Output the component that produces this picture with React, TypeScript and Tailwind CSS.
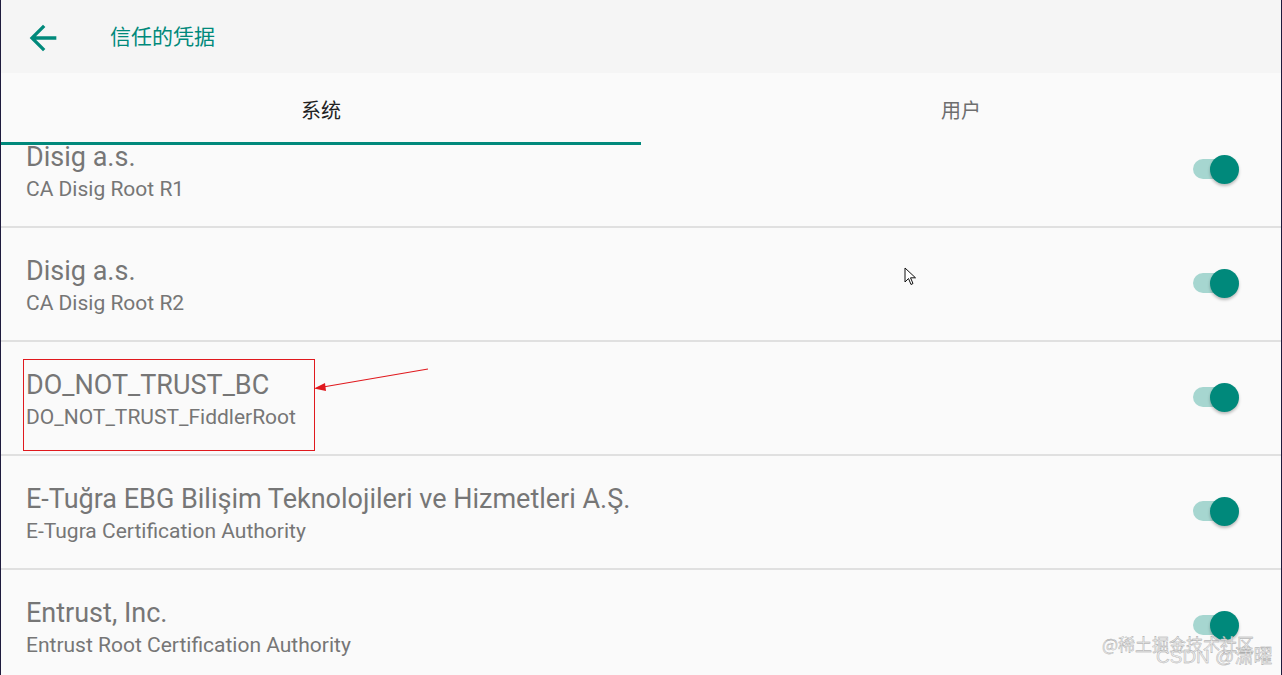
const rows = [
  { title: 'Disig a.s.', subtitle: 'CA Disig Root R1' },
  { title: 'Disig a.s.', subtitle: 'CA Disig Root R2' },
  { title: 'DO_NOT_TRUST_BC', subtitle: 'DO_NOT_TRUST_FiddlerRoot' },
  { title: 'E-Tuğra EBG Bilişim Teknolojileri ve Hizmetleri A.Ş.', subtitle: 'E-Tugra Certification Authority' },
  { title: 'Entrust, Inc.', subtitle: 'Entrust Root Certification Authority' },
];

const font = { fontFamily: 'Roboto, "Noto Sans CJK SC", sans-serif' };

function Toggle() {
  return (
    <div className="relative h-[30px] w-[48px]">
      <div className="absolute left-[-2px] top-[5px] h-[20px] w-[42px] rounded-full bg-[#a6d6d0]" />
      <div className="absolute left-[15px] top-[1px] h-[29px] w-[29px] rounded-full bg-[#00897b] shadow-[0_2px_3px_rgba(0,0,0,0.25)]" />
    </div>
  );
}

function CertRow({ title, subtitle }: { title: string; subtitle: string }) {
  return (
    <div className="flex h-[114px] shrink-0 items-start justify-between border-b-2 border-[#e0e0e0] pl-[25px] pr-[38px]">
      <div className="pt-[28px]">
        <div className="h-[30px] text-[27px] leading-[30px] text-[#767676]">{title}</div>
        <div className="mt-[4px] h-[26px] text-[21px] leading-[26px] text-[#767676]">{subtitle}</div>
      </div>
      <div className="pt-[40px]">
        <Toggle />
      </div>
    </div>
  );
}

export default function App() {
  return (
    <div className="relative h-[675px] w-[1282px] overflow-hidden border-x border-[#1e1b3d] bg-[#fafafa]" style={font}>
      <div className="relative z-10 flex h-[73px] items-center bg-[#f5f5f5] pt-[3px] shadow-[0_1px_2px_rgba(0,0,0,0.12)]">
        <svg viewBox="0 0 24 24" className="ml-[22px] h-[40px] w-[40px]" fill="#00897b">
          <path d="M20 11H7.83l5.59-5.59L12 4l-8 8 8 8 1.41-1.41L7.83 13H20v-2z" />
        </svg>
        <div className="ml-[47px] text-[21px] text-[#00897b]">信任的凭据</div>
      </div>
      <div className="relative z-10 flex h-[72px] bg-[#fafafa]">
        <div className="relative flex flex-1 items-center justify-center pt-[3px] text-[20px] text-[#212121]">
          系统
          <div className="absolute bottom-0 left-0 right-0 h-[3px] bg-[#00897b]" />
        </div>
        <div className="flex flex-1 items-center justify-center pt-[3px] text-[20px] text-[#6e6e6e]">用户</div>
      </div>
      <div className="mt-[-31px] flex flex-col">
        {rows.map((r, i) => (
          <CertRow key={i} title={r.title} subtitle={r.subtitle} />
        ))}
      </div>

      {/* annotation box + arrow */}
      <div className="absolute left-[22px] top-[359px] h-[92px] w-[292px] border border-[#e0191e]" />
      <svg className="absolute left-[300px] top-[360px]" width="140" height="40" viewBox="0 0 140 40">
        <line x1="127" y1="9" x2="22" y2="27" stroke="#e0191e" strokeWidth="1.2" />
        <polygon points="13,28.5 24,23 25,31" fill="#e0191e" />
      </svg>

      {/* mouse cursor */}
      <svg className="absolute left-[903px] top-[267px]" width="14" height="20" viewBox="0 0 14 20">
        <path d="M1 1 L1 15 L4.5 11.5 L7 17.5 L9 16.5 L6.5 10.8 L11.5 10.8 Z" fill="#fff" stroke="#111" strokeWidth="1" strokeLinejoin="round" />
      </svg>

      {/* watermark */}
      <div
        className="absolute left-[1101px] top-[633px] text-[17px] leading-[22px] text-[#ececec]"
        style={{ WebkitTextStroke: '0.35px #a0a0a0', fontFamily: '"Noto Sans CJK SC", sans-serif' }}
      >
        @稀土掘金技术社区
      </div>
      <div
        className="absolute left-[1155px] top-[645px] text-[19px] leading-[24px] text-[#ececec]"
        style={{ WebkitTextStroke: '0.35px #a0a0a0', fontFamily: '"Liberation Sans", "Noto Sans CJK SC", sans-serif' }}
      >
        CSDN @潇曜
      </div>
    </div>
  );
}
